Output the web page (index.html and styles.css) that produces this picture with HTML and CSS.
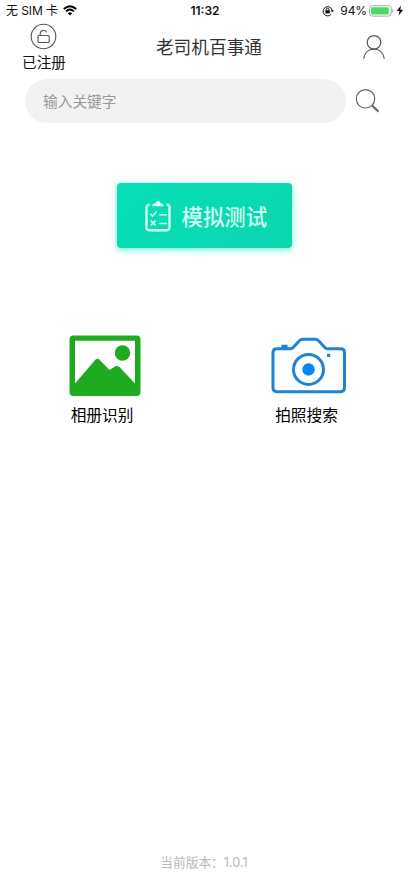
FILE: index.html
```html
<!DOCTYPE html>
<html lang="zh-CN">
<head>
<meta charset="utf-8">
<title>老司机百事通</title>
<link rel="stylesheet" href="styles.css">
</head>
<body>
<div class="app">
  <div class="status">
    <div class="carrier"><span>无 SIM 卡</span>
      <svg width="14" height="11" viewBox="0 0 14 11" fill="none" stroke="#000"><path d="M.8 4.1Q7-1.7 13.2 4.1" stroke-width="2"/><path d="M3 6.4Q7 2.8 11 6.4" stroke-width="1.9"/><path d="M4.8 8.2Q7 6.2 9.2 8.2L7 10.6z" fill="#000" stroke="none"/></svg>
    </div>
    <div class="time">11:32</div>
    <div class="power">
      <svg class="rotation" width="12" height="12" viewBox="0 0 12 12" fill="none" stroke="#111"><path d="M9.3 9.2A4.6 4.6 0 1 1 10.2 5.2"/><path d="M8.7 5.2h3.1l-1.5 2.2z" fill="#111" stroke="none"/><rect x="3.4" y="5.2" width="4.4" height="3.2" fill="#111" stroke="none"/><path d="M4.3 5.4V4.5a1.3 1.3 0 0 1 2.6 0v.9"/></svg>
      <span>94%</span>
      <svg class="battery" width="25" height="12" viewBox="0 0 25 12"><rect x=".5" y=".7" width="21.8" height="10.4" rx="2.8" fill="#fff" stroke="#a5aaa6"/><rect x="2" y="2.2" width="17.8" height="7.4" rx="1.4" fill="#4cd964"/><path d="M23.3 4v4q1.2-.6 1.2-2t-1.2-2" fill="#a5aaa6"/></svg>
      <svg width="8" height="11" viewBox="0 0 8 11"><path d="M5 .5.8 6.1h2.7L2.6 10.5 7.2 4.7H4.3z"/></svg>
    </div>
  </div>
  <header class="header">
    <div class="registered">
      <svg width="27" height="27" viewBox="0 0 27 27" fill="none" stroke="#555" stroke-width="1.1"><circle cx="13.5" cy="13.5" r="12.3"/><rect x="8" y="12.5" width="11.2" height="7" rx="1"/><path d="M10.2 12.5V10.5a3.3 3.3 0 0 1 6.4-1"/></svg>
      <span>已注册</span>
    </div>
    <h1>老司机百事通</h1>
    <svg class="user" width="24" height="26" viewBox="0 0 24 26" fill="none" stroke="#555" stroke-width="1.25"><circle cx="12" cy="8.3" r="6.8"/><path d="M1.7 24.7C2.5 18.6 6.7 15.2 12 15.2s9.5 3.4 10.3 9.5"/></svg>
  </header>
  <div class="search">
    <div class="field">输入关键字</div>
    <svg width="26" height="26" viewBox="0 0 26 26" fill="none" stroke="#666"><circle cx="10.5" cy="10.8" r="9.2" stroke-width="1.2"/><path d="m17 17.5 6.5 6.3" stroke-width="2.2"/></svg>
  </div>
  <div class="test">
    <svg width="26" height="32" viewBox="0 0 26 32" fill="none" stroke="#d4fff3"><path d="M4.6 4.8H4a2.5 2.5 0 0 0-2.5 2.5v20.4A2.5 2.5 0 0 0 4 30.2h18a2.5 2.5 0 0 0 2.5-2.5V7.3A2.5 2.5 0 0 0 22 4.8h-.6" stroke-width="2.4"/><path d="M7.2 6.2c0-2 1.3-2.8 3.2-3Q11 .7 13 .7t2.6 2.5c1.9.2 3.2 1 3.2 3z" fill="#d4fff3" stroke="none"/><path d="m5.2 13.8 2.3 2.3 4.2-4.6M14.2 14.7h8M5.8 20.6l4.8 4.8m0-4.8-4.8 4.8M14.2 23.5h8" stroke-width="1.6"/></svg>
    <span>模拟测试</span>
  </div>
  <div class="actions">
    <div class="action">
      <svg class="album" width="72" height="62" viewBox="0 0 72 62"><path fill="#1fab1f" fill-rule="evenodd" d="M4.5.6h63a4 4 0 0 1 4 4v52.5a4 4 0 0 1-4 4h-63a4 4 0 0 1-4-4V4.6a4 4 0 0 1 4-4zM6 5.7V48.6L26.3 24.8Q28.3 22.5 30.5 24.8L40.5 35 45.5 31.7Q48.5 30 51 32.5L66 48.6V5.7z"/><circle cx="53.5" cy="18" r="7.7" fill="#1fab1f"/></svg>
      <span>相册识别</span>
    </div>
    <div class="action">
      <svg class="camera" width="75" height="62" viewBox="0 0 76 62" fill="none" stroke="#1b83d8" stroke-width="3"><path d="M6 13.5h14q1.400 0 2.400-1.200L29 5.100Q30.200 3.800 32 3.800h13q1.800 0 3 1.300l6.600 7.200Q55.600 13.500 57 13.500h13.500q4 0 4 4v35.500q0 4-4 4H6q-4 0-4-4V17.500q0-4 4-4z"/><circle cx="38" cy="34.500" r="15.200"/><circle cx="38" cy="34.500" r="6.300" fill="#0787f5" stroke="none"/><path d="M10.500 9.500h6.300v4h-6.300zM56.800 18.700h3.200v3.200h-3.200z" fill="#1b83d8" stroke="none"/></svg>
      <span>拍照搜索</span>
    </div>
  </div>
  <footer class="version">当前版本：1.0.1</footer>
</div>
</body>
</html>
```
FILE: styles.css
```css
* { box-sizing: border-box; }
body {
  margin: 0;
  background: #fff;
  color: #111;
  font-family: Inter, "Noto Sans CJK SC", sans-serif;
}
svg { display: block; flex: none; }
span, h1 { white-space: nowrap; }
.app { height: 883px; display: flex; flex-direction: column; }
.status {
  height: 21px;
  display: grid;
  grid-template-columns: 1fr auto 1fr;
  align-items: center;
  padding: 0 4px 0 6px;
  font-size: 12px;
  line-height: 20px;
}
.carrier, .power { display: flex; align-items: center; }
.carrier { gap: 5px; }
.carrier span { letter-spacing: -.1px; }
.time { font-weight: 600; }
.power { justify-content: flex-end; }
.power span { letter-spacing: -.1px; }
.rotation { margin-right: 6px; }
.battery { margin: 0 2px 0 2px; }
.header {
  height: 54px;
  display: grid;
  grid-template-columns: 1fr auto 1fr;
  padding: 0 22px;
}
.registered {
  width: 44px;
  display: flex;
  flex-direction: column;
  align-items: center;
  gap: 2px;
  padding-top: 2px;
  font-size: 14.6px;
  line-height: 22px;
}
.registered svg { margin-right: 1px; }
.header h1 {
  margin: 14px -5px 0 5px;
  font-size: 17.7px;
  font-weight: 400;
  line-height: 26px;
  color: #333;
}
.user { justify-self: end; margin-top: 13px; }
.search {
  display: flex;
  align-items: center;
  gap: 9px;
  margin-top: 4px;
  padding-left: 25px;
}
.field {
  width: 321px;
  height: 44px;
  border-radius: 22px;
  padding-left: 18px;
  background: #f2f2f2;
  color: #999;
  font-size: 14.7px;
  line-height: 46px;
}
.test {
  width: 174.6px;
  height: 65px;
  margin: 60px 0 0 117.4px;
  padding-left: 27.6px;
  display: flex;
  align-items: center;
  gap: 10.5px;
  border-radius: 4px;
  background: linear-gradient(135deg, #06e0b6, #0ad5ad);
  box-shadow: 0 2px 7px #6ff4dc;
  color: #d4fff3;
  font-size: 21.4px;
  font-weight: 500;
}
.actions {
  display: grid;
  grid-template-columns: 1fr 1fr;
  margin-top: 87px;
}
.action {
  display: flex;
  flex-direction: column;
  align-items: center;
  gap: 7px;
  font-size: 15.7px;
  line-height: 24px;
  color: #000;
}
.album { margin-left: 6px; }
.camera { margin-left: 4px; }
.action:last-child { padding-left: 1px; }
.version {
  margin-top: auto;
  padding-bottom: 10px;
  text-align: center;
  font-size: 12.7px;
  line-height: 20px;
  color: #b8b8b8;
}
```
